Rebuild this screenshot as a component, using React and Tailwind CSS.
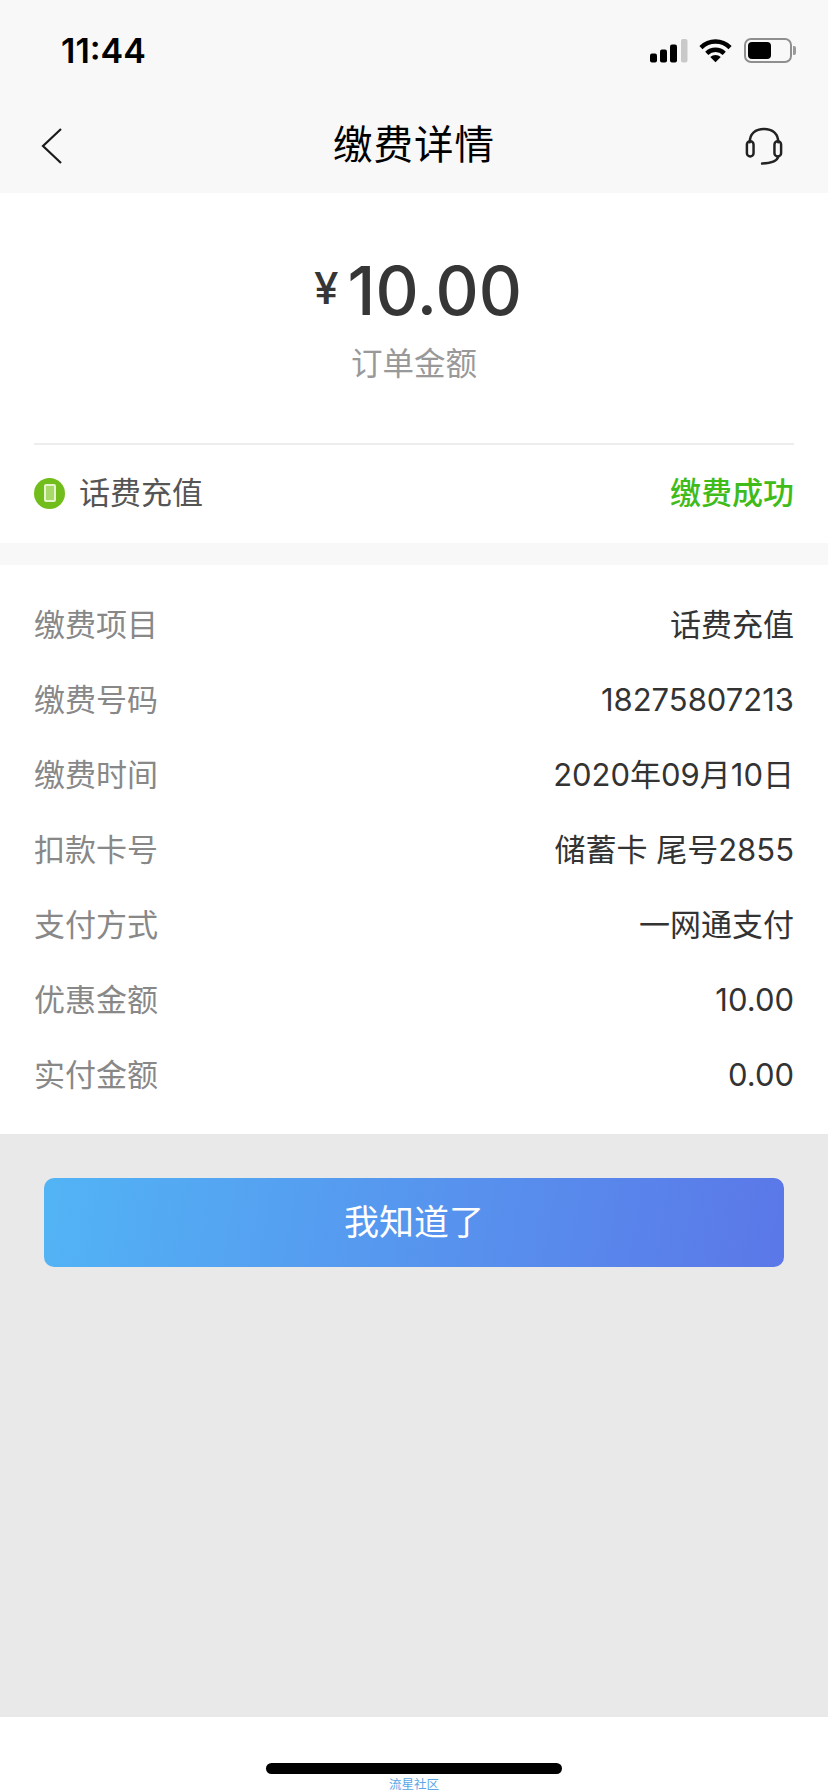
const CJK = '"Inter", "Noto Sans CJK SC", sans-serif';

const rows = [
  ['缴费项目', '话费充值'],
  ['缴费号码', '18275807213'],
  ['缴费时间', '2020年09月10日'],
  ['扣款卡号', '储蓄卡 尾号2855'],
  ['支付方式', '一网通支付'],
  ['优惠金额', '10.00'],
  ['实付金额', '0.00'],
];

function StatusIcons() {
  return (
    <div className="flex items-center">
      <svg width="38" height="26" viewBox="0 0 38 26" fill="currentColor">
        <rect x="0" y="15.5" width="7" height="9" rx="2" />
        <rect x="10" y="11.5" width="7" height="13" rx="2" />
        <rect x="20" y="6.5" width="7" height="18" rx="2" />
        <rect x="31" y="1" width="6.5" height="23.5" rx="2" fill="#c9c9c9" />
      </svg>
      <svg className="ml-[11px]" width="33" height="25" viewBox="0 0 34 25" fill="none" stroke="currentColor" strokeWidth="4.6">
        <path d="M2 9.5 C10.5 1.2 23.5 1.2 32 9.5" />
        <path d="M8 15.5 C13 10.6 21 10.6 26 15.5" />
        <path d="M17 24.5 L11.6 19.2 C14.6 16.4 19.4 16.4 22.4 19.2 Z" fill="currentColor" stroke="none" />
      </svg>
      <div className="ml-[12px] flex h-[25px] w-[48px] items-center rounded-[7px] border-[2px] border-[#8f8f8f] p-[2px]">
        <div className="h-full w-[23px] rounded-[4px] bg-black" />
      </div>
      <div className="ml-[1px] h-[9px] w-[3px] rounded-r-[2px] bg-[#9a9a9a]" />
    </div>
  );
}

export default function App() {
  return (
    <div className="flex h-[1792px] w-[828px] flex-col overflow-hidden bg-[#e9e9e9]" style={{ fontFamily: CJK }}>
      <header className="h-[193px] bg-[#f8f8f8] text-black">
        <div className="flex h-[100px] items-center justify-between pt-[1px] pr-[32px] pl-[61px]">
          <span className="text-[34px] font-semibold leading-none" style={{ fontFamily: 'Inter, sans-serif' }}>11:44</span>
          <StatusIcons />
        </div>
        <div className="grid h-[93px] grid-cols-[1fr_auto_1fr] items-start px-[45px]">
          <svg className="mt-[27px] -ml-[5px]" width="24" height="38" viewBox="0 0 24 38" fill="none" stroke="#1a1a1a" strokeWidth="2.2">
            <path d="M21 2 L3 19 L21 36" />
          </svg>
          <h1 className="mt-[18px] text-[39.5px] leading-[54px] font-normal tracking-[1px]">缴费详情</h1>
          <svg className="mt-[27px] justify-self-end" width="38" height="38" viewBox="0 0 40 40" fill="none" stroke="#222" strokeWidth="2.6" strokeLinecap="round">
            <path d="M5 16 C5 7 11 2 20 2 C29 2 35 7 35 16" />
            <rect x="2" y="15" width="7" height="16" rx="3.5" />
            <rect x="31" y="15" width="7" height="16" rx="3.5" />
            <path d="M35 31 C34 36 28 38 18 38.5" />
          </svg>
        </div>
      </header>

      <section className="h-[350px] bg-white px-[34px]">
        <div className="flex h-[252px] flex-col items-center border-b-2 border-[#ededed]">
          <div className="mt-[61px] ml-[8px] flex h-[72px] items-center text-[#363636]">
            <span className="mr-[9px] mb-[4px] text-[44px] leading-none font-medium">¥</span>
            <span className="text-[67px] leading-none font-medium">10.00</span>
          </div>
          <p className="mt-[16px] text-[31.5px] leading-[44px] text-[#999]">订单金额</p>
        </div>
        <div className="flex h-[96px] items-center justify-between">
          <div className="flex items-center">
            <div className="flex h-[31px] w-[31px] items-center justify-center rounded-full bg-[#71bd1c]">
              <div className="h-[18px] w-[12px] rounded-[2px] border-[2px] border-[#e6f4d2] bg-[#a9d96a]" />
            </div>
            <span className="ml-[14px] text-[31px] leading-[44px] text-[#555]">话费充值</span>
          </div>
          <span className="text-[31px] leading-[44px] font-medium text-[#3fbb1a]">缴费成功</span>
        </div>
      </section>

      <div className="h-[22px] bg-[#f8f8f8]" />

      <section className="flex h-[569px] flex-col bg-white px-[34px] pt-[22px]">
        {rows.map(([label, value]) => (
          <div key={label} className="flex h-[75px] items-center justify-between text-[31px] leading-[44px]">
            <span className="text-[#888]">{label}</span>
            <span className="text-[#333]">{value}</span>
          </div>
        ))}
      </section>

      <div className="flex-1 px-[44px] pt-[44px]">
        <button className="flex h-[89px] w-full items-center justify-center rounded-[10px] bg-[linear-gradient(100deg,#52b4f5,#5b77e8)] text-[35px] text-white">
          我知道了
        </button>
      </div>

      <footer className="flex h-[75px] flex-col items-center bg-white pt-[46px]">
        <div className="h-[11px] w-[296px] shrink-0 rounded-full bg-black" />
        <span className="mt-[4px] text-[12.5px] leading-[14px] text-[#5aa6e6]">流星社区</span>
      </footer>
    </div>
  );
}
